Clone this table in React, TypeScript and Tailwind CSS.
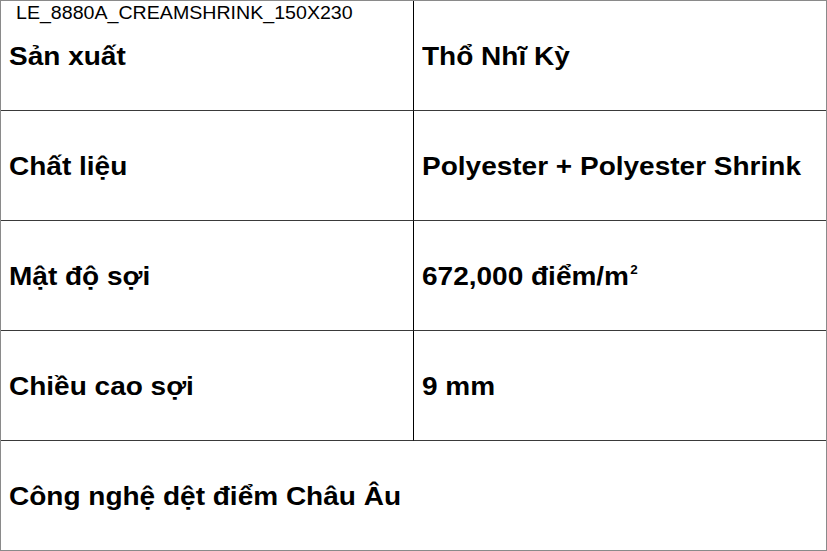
const rows: { label: string; value: React.ReactNode }[] = [
  { label: "Sản xuất", value: "Thổ Nhĩ Kỳ" },
  { label: "Chất liệu", value: "Polyester + Polyester Shrink" },
  {
    label: "Mật độ sợi",
    value: (
      <>
        672,000 điểm/m
        <span className="relative -top-[11px] ml-[1px] text-[12px] font-bold">2</span>
      </>
    ),
  },
  { label: "Chiều cao sợi", value: "9 mm" },
];

function Wide({ children }: { children: React.ReactNode }) {
  return (
    <span className="inline-block origin-left scale-x-[1.12] whitespace-nowrap">
      {children}
    </span>
  );
}

export default function App() {
  return (
    <div className="relative h-[551px] w-[827px] overflow-hidden bg-white font-['Liberation_Sans',Arial,sans-serif] text-black">
      <div className="box-border h-[551px] w-[827px] border border-[#8a8a8a]">
        <div className="grid grid-cols-[413px_1fr]">
          {rows.map((row) => (
            <div key={row.label} className="contents">
              <div className="box-border flex h-[110px] items-center border-r border-b border-r-black border-b-[#3a3a3a] px-[8px] pt-[3px] text-[25px] font-bold">
                <Wide>{row.label}</Wide>
              </div>
              <div className="box-border flex h-[110px] items-center border-b border-[#3a3a3a] px-[8px] pt-[3px] text-[25px] font-bold">
                <Wide>{row.value}</Wide>
              </div>
            </div>
          ))}
          <div className="col-span-2 flex h-[109px] items-center px-[8px] pt-[3px] text-[25px] font-bold">
            <Wide>Công nghệ dệt điểm Châu Âu</Wide>
          </div>
        </div>
      </div>
      <div className="absolute left-[16px] top-[3px] text-[17.5px] leading-[20px]">
        <Wide>LE_8880A_CREAMSHRINK_150X230</Wide>
      </div>
    </div>
  );
}
